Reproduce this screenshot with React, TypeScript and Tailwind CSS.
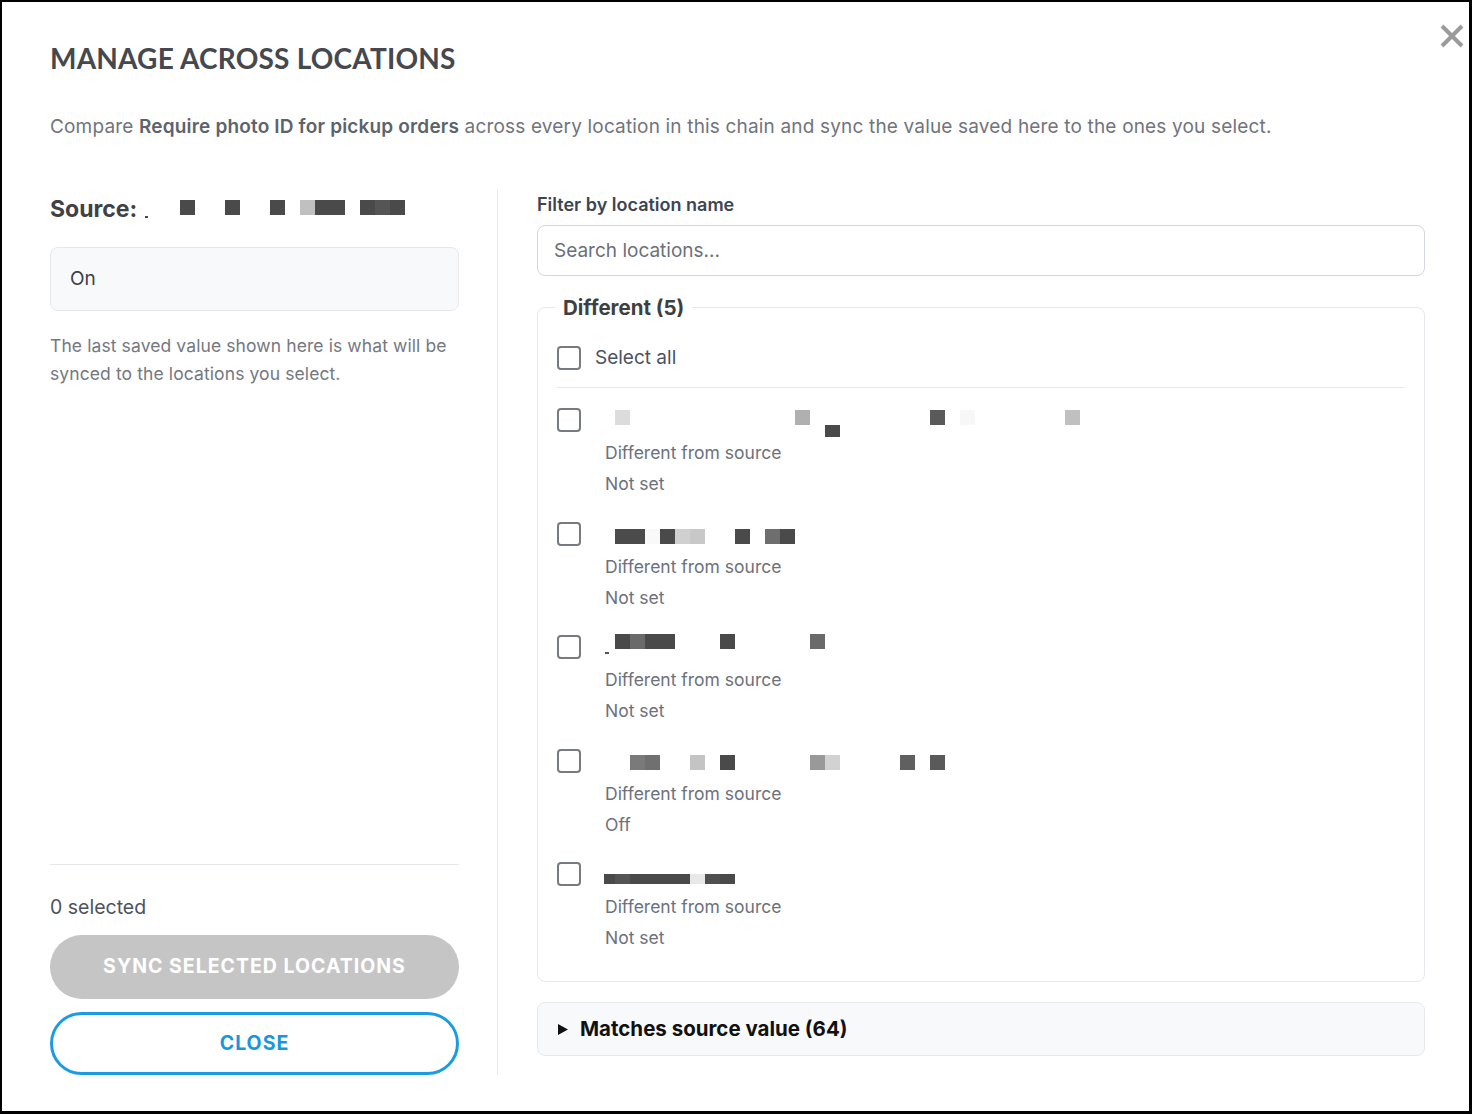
import React from "react";

type Block = { x: number; y: number; c: string; w?: number; h?: number };

type Location = {
  id: string;
  value: string;
  blocks: Block[];
};

// obscured location names, drawn as mosaics
const sourceBlocks: Block[] = [
  { x: 5, y: 25, c: "#4a4a4a", w: 3, h: 2 },
  { x: 40, y: 9, c: "#4a4a4a" },
  { x: 85, y: 9, c: "#4a4a4a" },
  { x: 130, y: 9, c: "#4a4a4a" },
  { x: 160, y: 9, c: "#c0c0c0" },
  { x: 175, y: 9, c: "#4a4a4a", w: 30 },
  { x: 220, y: 9, c: "#4a4a4a" },
  { x: 235, y: 9, c: "#555555" },
  { x: 250, y: 9, c: "#4a4a4a" },
];

const locations: Location[] = [
  {
    id: "loc-1",
    value: "Not set",
    blocks: [
      { x: 15, y: 4, c: "#dcdcdc" },
      { x: 195, y: 4, c: "#b0b0b0" },
      { x: 225, y: 19, c: "#4a4a4a", h: 12 },
      { x: 330, y: 4, c: "#5a5a5a" },
      { x: 360, y: 4, c: "#f7f7f7" },
      { x: 465, y: 4, c: "#c0c0c0" },
    ],
  },
  {
    id: "loc-2",
    value: "Not set",
    blocks: [
      { x: 15, y: 9, c: "#4b4b4b", w: 30 },
      { x: 45, y: 9, c: "#f9f9f9" },
      { x: 60, y: 9, c: "#4a4a4a" },
      { x: 75, y: 9, c: "#d0d0d0" },
      { x: 90, y: 9, c: "#c8c8c8" },
      { x: 135, y: 9, c: "#4a4a4a" },
      { x: 165, y: 9, c: "#6e6e6e" },
      { x: 180, y: 9, c: "#4a4a4a" },
    ],
  },
  {
    id: "loc-3",
    value: "Not set",
    blocks: [
      { x: 5, y: 19, c: "#555555", w: 4, h: 2 },
      { x: 15, y: 1, c: "#4a4a4a" },
      { x: 30, y: 1, c: "#6a6a6a" },
      { x: 45, y: 1, c: "#4a4a4a", w: 30 },
      { x: 120, y: 1, c: "#4a4a4a" },
      { x: 210, y: 1, c: "#6a6a6a" },
    ],
  },
  {
    id: "loc-4",
    value: "Off",
    blocks: [
      { x: 30, y: 8, c: "#7a7a7a" },
      { x: 45, y: 8, c: "#707070" },
      { x: 90, y: 8, c: "#c4c4c4" },
      { x: 120, y: 8, c: "#4a4a4a" },
      { x: 210, y: 8, c: "#999999" },
      { x: 225, y: 8, c: "#d2d2d2" },
      { x: 300, y: 8, c: "#606060" },
      { x: 330, y: 8, c: "#5a5a5a" },
    ],
  },
  {
    id: "loc-5",
    value: "Not set",
    blocks: [
      { x: 4, y: 14, c: "#4a4a4a", w: 11, h: 10 },
      { x: 15, y: 14, c: "#545454", h: 10 },
      { x: 30, y: 14, c: "#4a4a4a", w: 60, h: 10 },
      { x: 90, y: 14, c: "#e8e8e8", h: 10 },
      { x: 105, y: 14, c: "#505050", h: 10 },
      { x: 120, y: 14, c: "#4a4a4a", h: 10 },
    ],
  },
];

const Mosaic = ({ blocks, width, height, className }: { blocks: Block[]; width: number; height: number; className?: string }) => (
  <svg width={width} height={height} viewBox={`0 0 ${width} ${height}`} className={`block shrink-0 ${className ?? ""}`} aria-hidden>
    {blocks.map((b, i) => (
      <rect key={i} x={b.x} y={b.y} width={b.w ?? 15} height={b.h ?? 15} fill={b.c} />
    ))}
  </svg>
);

const Checkbox = () => (
  <span className="block w-[24px] h-[24px] shrink-0 rounded-[4px] border-2 border-[#777a7f] bg-white" />
);

const LocationRow = ({ loc }: { loc: Location }) => (
  <div className="flex items-start">
    <Checkbox />
    <div className="ml-[24px] flex flex-col">
      <Mosaic blocks={loc.blocks} width={500} height={31} className="-ml-[5px] -mt-[2px]" />
      <div className="text-[17.5px] leading-[31px] text-[#6c717c]">Different from source</div>
      <div className="text-[17.5px] leading-[31px] text-[#6c717c]">{loc.value}</div>
    </div>
  </div>
);

export default function App() {
  return (
    <div className="w-[1472px] h-[1114px] bg-white border-t-2 border-l-2 border-r-[3px] border-b-[3px] border-black font-['Inter','Liberation_Sans',sans-serif]">
      <div className="relative h-full pl-[48px] pr-[44px] pt-[39px]">
        {/* close icon */}
        <button type="button" aria-label="Close" className="absolute left-[1438px] top-[22px] w-[24px] h-[24px]">
          <svg viewBox="0 0 24 24" width="24" height="24">
            <path d="M2 2 L22 22 M22 2 L2 22" stroke="#9b9b9b" strokeWidth="4" strokeLinecap="butt" />
          </svg>
        </button>

        <h1 className="font-['Lato',sans-serif] text-[28px] leading-[34px] font-bold text-[#45484d] tracking-[0.2px]">
          MANAGE ACROSS LOCATIONS
        </h1>
        <p className="mt-[38px] text-[19px] leading-[28px] tracking-[0.17px] text-[#70747b]">
          Compare <span className="font-semibold text-[#5d636d]">Require photo ID for pickup orders</span> across every
          location in this chain and sync the value saved here to the ones you select.
        </p>

        <div className="mt-[49px] flex h-[885px]">
          {/* left: source value */}
          <div className="w-[409px] flex flex-col">
            <div className="flex items-center h-[37px]">
              <span className="w-[90px] mt-[2px] text-[23px] font-bold text-[#3f4146]">Source:</span>
              <Mosaic blocks={sourceBlocks} width={265} height={36} className="-mb-[1px]" />
            </div>
            <div className="mt-[20px] h-[64px] rounded-[8px] border border-[#e6e8eb] bg-[#f8f9fa] px-[19px] flex items-center text-[19px] text-[#3c4048]">
              <span className="mt-[1px]">On</span>
            </div>
            <p className="mt-[21px] text-[17.5px] leading-[28px] tracking-[0.1px] text-[#747880]">
              The last saved value shown here is what will be synced to the locations you select.
            </p>

            <div className="mt-auto border-t border-[#e6e8eb] pt-[28px]">
              <div className="text-[19.5px] leading-[28px] text-[#4b5262]">0 selected</div>
              <button
                type="button"
                disabled
                className="mt-[14px] w-full h-[64px] rounded-full bg-[#c6c5c6] text-white text-[19.5px] font-bold tracking-[1px]"
              >
                SYNC SELECTED LOCATIONS
              </button>
              <button
                type="button"
                className="mt-[13px] w-full h-[63px] rounded-full border-[3px] border-[#1d9be2] bg-white text-[#1a96dc] text-[19.5px] font-bold tracking-[1px]"
              >
                CLOSE
              </button>
            </div>
          </div>

          <div className="ml-[38px] mr-[39px] w-px bg-[#e6e8eb]" />

          {/* right: location list */}
          <div className="flex-1 flex flex-col">
            <label className="mt-[3px] text-[18px] leading-[24px] font-semibold text-[#3d4453]">Filter by location name</label>
            <input
              type="text"
              placeholder="Search locations..."
              className="mt-[8px] h-[51px] w-full rounded-[8px] border border-[#d4d7dc] px-[16px] text-[19px] text-[#3c4048] placeholder:text-[#6b7078] outline-none"
            />

            <fieldset className="mt-[17px] rounded-[8px] border border-[#e6e8eb] px-[19px] pt-[25px] pb-[28px]">
              <legend className="-ml-[2px] px-[8px] text-[20.5px] leading-[28px] font-bold text-[#3f3f42]">
                <span className="relative top-[1px]">Different (5)</span>
              </legend>
              <div className="flex items-center pb-[17px] border-b border-[#e6e8eb]">
                <Checkbox />
                <span className="ml-[14px] text-[19px] leading-[24px] text-[#4b5260]">Select all</span>
              </div>
              <div className="pt-[20px] flex flex-col gap-[22.5px]">
                {locations.map((loc) => (
                  <LocationRow key={loc.id} loc={loc} />
                ))}
              </div>
            </fieldset>

            <div className="mt-[20px] h-[54px] rounded-[8px] border border-[#e6e8eb] bg-[#f8f9fa] flex items-center pl-[20px]">
              <svg width="10" height="11" viewBox="0 0 10 11" className="block">
                <path d="M0 0 L10 5.5 L0 11 Z" fill="#111" />
              </svg>
              <span className="ml-[12px] text-[20.5px] font-bold text-[#111]">Matches source value (64)</span>
            </div>
          </div>
        </div>
      </div>
    </div>
  );
}
